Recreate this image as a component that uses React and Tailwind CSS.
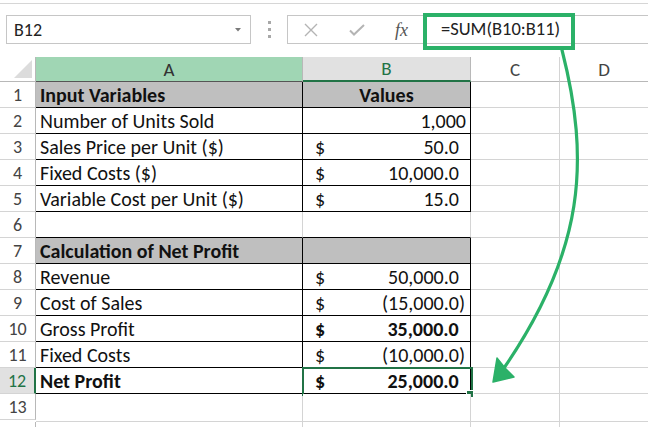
import React from "react";

const rows = [
  { n: 1, a: "Input Variables", b: "Values", kind: "head" },
  { n: 2, a: "Number of Units Sold", v: "1,000", plain: true },
  { n: 3, a: "Sales Price per Unit ($)", v: "50.0", dollar: true },
  { n: 4, a: "Fixed Costs ($)", v: "10,000.0", dollar: true },
  { n: 5, a: "Variable Cost per Unit ($)", v: "15.0", dollar: true },
  { n: 6, kind: "gap" },
  { n: 7, a: "Calculation of Net Profit", kind: "head" },
  { n: 8, a: "Revenue", v: "50,000.0", dollar: true },
  { n: 9, a: "Cost of Sales", v: "(15,000.0)", dollar: true, paren: true },
  { n: 10, a: "Gross Profit", v: "35,000.0", dollar: true, boldB: true },
  { n: 11, a: "Fixed Costs", v: "(10,000.0)", dollar: true, paren: true },
  { n: 12, a: "Net Profit", v: "25,000.0", dollar: true, boldA: true, boldB: true, selected: true },
  { n: 13, kind: "empty" },
  { n: "", kind: "empty" },
];

function RowHead({ n, active }) {
  return (
    <div
      className={
        "h-[26px] flex items-center justify-center text-[18px] border-b border-b-[#d4d4d4] " +
        (active
          ? "bg-[#e1e1e1] text-[#217346] border-r-2 border-r-[#217346]"
          : "bg-white text-[#444] border-r border-r-[#b8b8b8]")
      }
    >
      {n}
    </div>
  );
}

function ValueCell({ row }) {
  return (
    <div className={"h-full flex items-center justify-between pl-[12px] pr-[5px] " + (row.boldB ? "font-bold" : "")}>
      <span>$</span>
      <span>
        {row.v}
        {!row.paren && <span className="invisible">)</span>}
      </span>
    </div>
  );
}

export default function App() {
  return (
    <div className="relative w-[648px] h-[427px] overflow-hidden bg-white text-[#111] font-['Carlito','Lato',sans-serif] text-[20px] leading-none">
      {/* formula bar */}
      <div className="h-[57px] pt-[3px]">
        <div className="border-t border-[#d6d6d6]" />
        <div className="flex items-center mt-[11px] h-[29px]">
          <div className="ml-[6px] w-[245px] h-[29px] border border-[#c6c6c6] flex items-center justify-between pl-[7px] pr-[9px]">
            <span className="text-[18px] text-[#222]">B12</span>
            <svg width="6" height="4" viewBox="0 0 6 4">
              <path d="M0 0 H6 L3 3.5 Z" fill="#7a7a7a" />
            </svg>
          </div>
          <div className="ml-[17px] flex flex-col gap-[4px]">
            <span className="w-[3px] h-[3px] bg-[#a8a8a8]" />
            <span className="w-[3px] h-[3px] bg-[#a8a8a8]" />
            <span className="w-[3px] h-[3px] bg-[#a8a8a8]" />
          </div>
          <div className="ml-[16px] flex-1 h-[29px] border-y border-l border-[#c6c6c6] flex items-center">
            <svg className="ml-[16px]" width="14" height="14" viewBox="0 0 14 14">
              <path d="M1 1 L13 13 M13 1 L1 13" stroke="#b4b4b4" strokeWidth="1.4" fill="none" />
            </svg>
            <svg className="ml-[31px]" width="16" height="12" viewBox="0 0 16 12">
              <path d="M1 6.5 L5 10.5 L15 1" stroke="#b4b4b4" strokeWidth="2" fill="none" />
            </svg>
            <span className="ml-[30px] text-[#555] italic font-['Liberation_Serif',serif] text-[18px]">fx</span>
            <span className="ml-[33px] text-[18.5px] text-[#222]">=SUM(B10:B11)</span>
          </div>
        </div>
      </div>

      {/* sheet grid */}
      <div className="grid grid-cols-[36px_267px_168px_89px_88px]">
        {/* column headers */}
        <div className="h-[25px] bg-white border-r border-r-[#b8b8b8] border-b border-b-[#b8b8b8] relative">
          <svg className="absolute right-[3px] bottom-[3px]" width="18" height="18" viewBox="0 0 18 18">
            <path d="M18 0 V18 H0 Z" fill="#dcdcdc" />
          </svg>
        </div>
        <div className="h-[25px] text-[19px] bg-[#a0d6b4] border-r border-r-[#b8b8b8] border-b border-b-[#555] flex items-center justify-center text-[#333]">A</div>
        <div className="h-[25px] text-[19px] bg-[#e1e1e1] border-r border-r-[#b8b8b8] border-b-2 border-b-[#217346] flex items-center justify-center text-[#217346]">B</div>
        <div className="h-[25px] text-[19px] bg-white border-r border-r-[#d4d4d4] border-b border-b-[#b8b8b8] flex items-center justify-center text-[#444]">C</div>
        <div className="h-[25px] text-[19px] bg-white border-b border-b-[#b8b8b8] flex items-center justify-center text-[#444]">D</div>

        {rows.map((row, i) => {
          const boxed = row.kind !== "gap" && row.kind !== "empty";
          const gapRow = row.kind === "gap";
          const cellBorder = boxed
            ? "border-r border-b border-black"
            : gapRow
            ? "border-r border-r-[#d4d4d4] border-b border-b-black"
            : "border-r border-b border-[#d4d4d4]";
          const fill = row.kind === "head" ? "bg-[#bfbfbf]" : "bg-white";
          const h = row.n === 13 ? "h-[28px]" : "h-[26px]";
          return (
            <React.Fragment key={i}>
              <RowHead n={row.n} active={row.selected} />
              <div className={h + " flex items-center pl-[4px] " + cellBorder + " " + fill + (row.kind === "head" || row.boldA ? " font-bold" : "")}>
                {row.a}
              </div>
              <div className={h + " relative " + cellBorder + " " + fill}>
                {row.kind === "head" && row.b && (
                  <div className="h-full flex items-center justify-center font-bold">{row.b}</div>
                )}
                {row.plain && (
                  <div className="h-full flex items-center justify-end pr-[4px]">{row.v}</div>
                )}
                {row.dollar && <ValueCell row={row} />}
                {row.selected && (
                  <>
                    <div className="absolute -left-[1px] -top-[1px] w-[171px] h-[29px] border-2 border-[#217346]" />
                    <div className="absolute -right-[3px] -bottom-[4px] w-[6px] h-[6px] bg-[#217346] outline outline-1 outline-white" />
                  </>
                )}
              </div>
              <div className={h + " border-r border-b border-[#d4d4d4]"} />
              <div className={h + " border-b border-[#d4d4d4]"} />
            </React.Fragment>
          );
        })}
      </div>

      {/* annotation: highlight on formula + arrow to result */}
      <div className="absolute left-[423px] top-[13px] w-[152px] h-[37px] border-4 border-[#2bb168]" />
      <svg className="absolute left-0 top-0 pointer-events-none" width="648" height="427" viewBox="0 0 648 427">
        <path d="M562 50 C590 160 585 250 504 368" stroke="#2bb168" strokeWidth="3.2" fill="none" strokeLinecap="round" />
        <path d="M493 382 L497 358 L505 368 L514 377 Z" fill="#2bb168" stroke="#2bb168" strokeWidth="1.5" strokeLinejoin="round" />
      </svg>
    </div>
  );
}
